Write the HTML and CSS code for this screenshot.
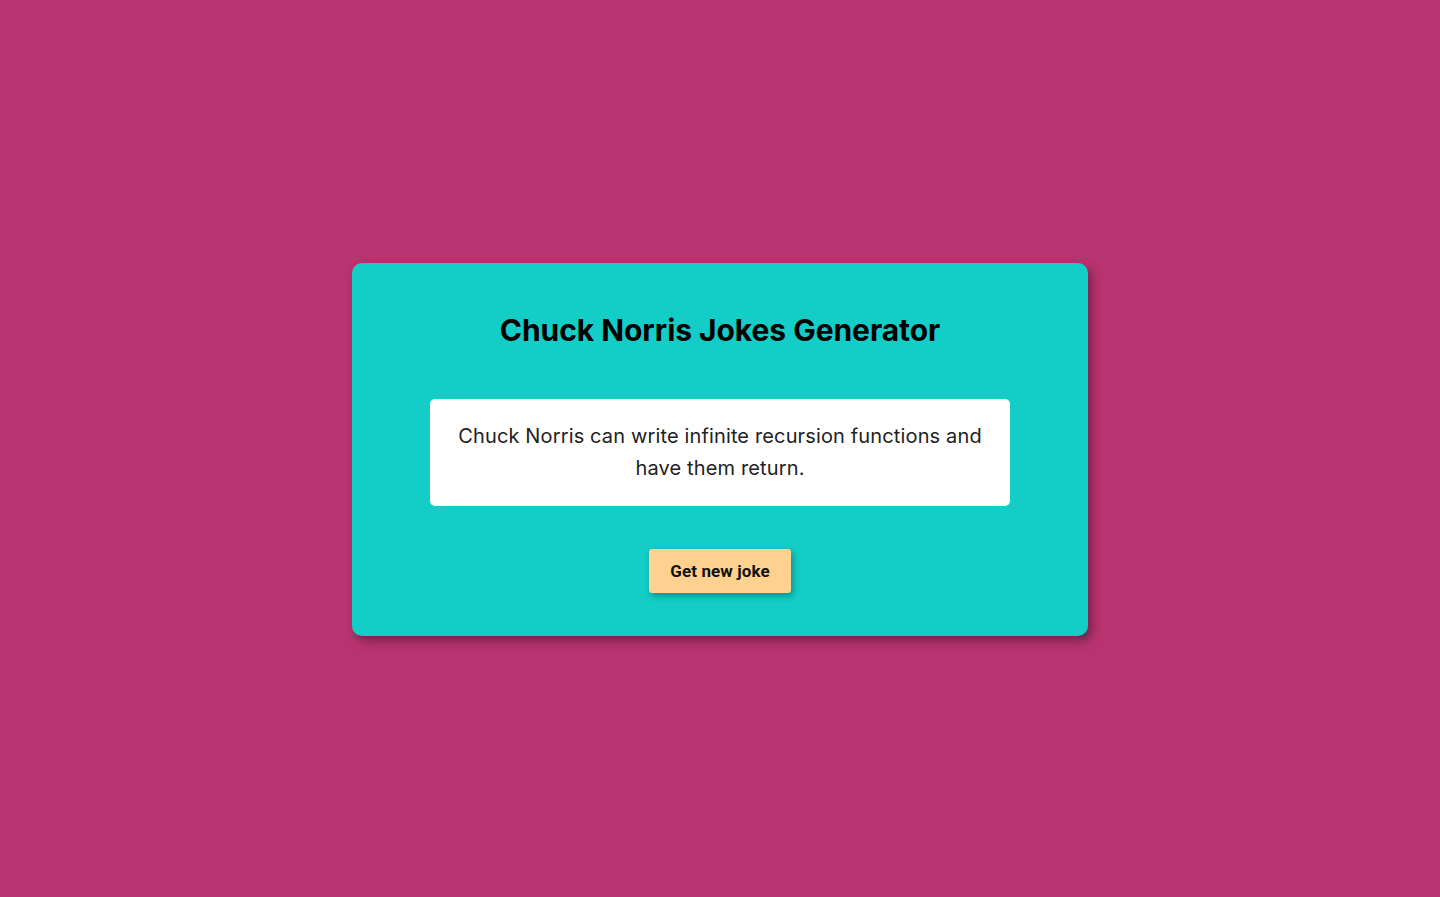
FILE: index.html
```html
<!DOCTYPE html>
<html lang="en">
<head>
<meta charset="utf-8">
<title>Chuck Norris Jokes Generator</title>
<link rel="stylesheet" href="styles.css">
</head>
<body>
<main class="page">
  <section class="card">
    <h1 class="title">Chuck Norris Jokes Generator</h1>
    <p class="joke">Chuck Norris can write infinite recursion functions and have them return.</p>
    <button class="btn" type="button">Get new joke</button>
  </section>
</main>
</body>
</html>
```

FILE: styles.css
```css
* { box-sizing: border-box; }
html, body { margin: 0; padding: 0; }
body {
  background: #b83370;
  font-family: Inter, "Noto Sans", sans-serif;
  height: 897px;
  overflow: hidden;
}
.page {
  height: 100%;
  display: flex;
  align-items: center;
  justify-content: center;
  padding-top: 2px;
}
.card {
  width: 736px;
  background: #13cdc6;
  border-radius: 10px;
  box-shadow: 4px 5px 10px rgba(0, 0, 0, 0.35);
  padding: 40px 78px 43px;
  display: flex;
  flex-direction: column;
  align-items: center;
}
.title {
  margin: 0;
  font-size: 30px;
  line-height: 54px;
  font-weight: 700;
  color: #000;
  letter-spacing: -0.05px;
}
.joke {
  margin: 42px 0 0;
  width: 580px;
  background: #fff;
  border-radius: 5px;
  padding: 21px 20px 22px;
  font-size: 20px;
  line-height: 32px;
  font-weight: 400;
  letter-spacing: 0.14px;
  color: #222;
  text-align: center;
}
.btn {
  margin-top: 43px;
  width: 142px;
  height: 44px;
  background: #fed28e;
  border: none;
  border-radius: 3px;
  box-shadow: 2px 3px 6px rgba(0, 0, 0, 0.3);
  font-family: Roboto, "Liberation Sans", sans-serif;
  font-weight: 700;
  font-size: 17px;
  letter-spacing: 0.1px;
  color: #111;
  cursor: pointer;
}
```
